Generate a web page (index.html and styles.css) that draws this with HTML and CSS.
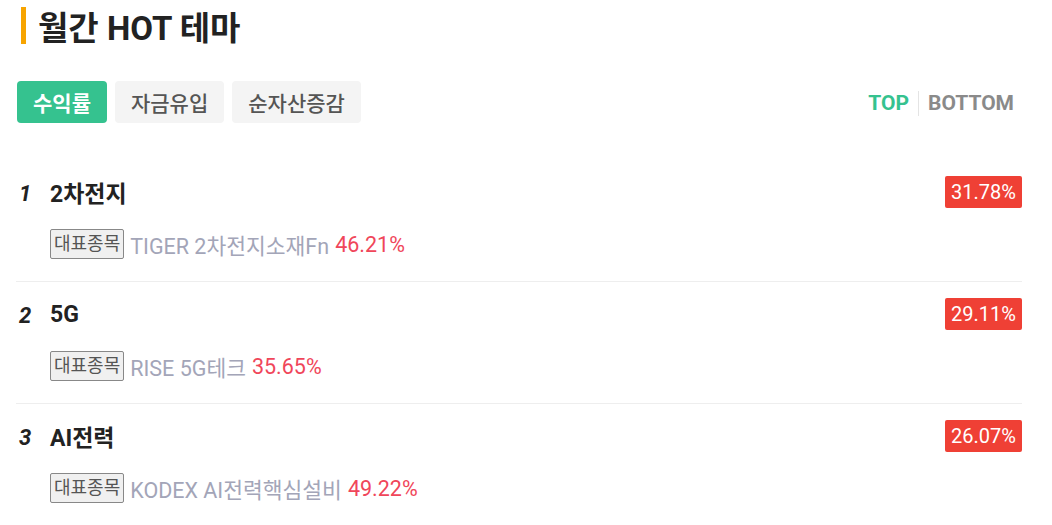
FILE: index.html
```html
<!DOCTYPE html>
<html lang="ko">
<head>
<meta charset="utf-8">
<link rel="stylesheet" href="styles.css">
</head>
<body>
<div class="wrap">
  <h2 class="title"><span class="bar"></span>월간 HOT 테마</h2>
  <div class="toolbar">
    <div class="tabs">
      <button class="tab active">수익률</button>
      <button class="tab">자금유입</button>
      <button class="tab">순자산증감</button>
    </div>
    <div class="sort">
      <span class="sort-item on">TOP</span>
      <span class="sep"></span>
      <span class="sort-item">BOTTOM</span>
    </div>
  </div>
  <ul class="list">
    <li class="row">
      <div class="main">
        <span class="rank">1</span>
        <span class="name">2차전지</span>
        <span class="rate">31.78%</span>
      </div>
      <div class="sub">
        <span class="tag">대표종목</span>
        <span class="fund">TIGER 2차전지소재Fn</span>
        <span class="fund-rate">46.21%</span>
      </div>
    </li>
    <li class="row">
      <div class="main">
        <span class="rank">2</span>
        <span class="name">5G</span>
        <span class="rate">29.11%</span>
      </div>
      <div class="sub">
        <span class="tag">대표종목</span>
        <span class="fund">RISE 5G테크</span>
        <span class="fund-rate">35.65%</span>
      </div>
    </li>
    <li class="row">
      <div class="main">
        <span class="rank">3</span>
        <span class="name">AI전력</span>
        <span class="rate">26.07%</span>
      </div>
      <div class="sub">
        <span class="tag">대표종목</span>
        <span class="fund">KODEX AI전력핵심설비</span>
        <span class="fund-rate">49.22%</span>
      </div>
    </li>
  </ul>
</div>
</body>
</html>
```

FILE: styles.css
```css
* { box-sizing: border-box; }
html, body { margin: 0; padding: 0; background: #fff; }
body {
  font-family: Roboto, "Noto Sans CJK KR", sans-serif;
  color: #222;
}
.wrap {
  padding: 7px 30px 0 16px;
}
.title {
  display: flex;
  align-items: center;
  gap: 12px;
  height: 37px;
  margin: 0;
  padding-left: 5px;
  font-size: 33px;
  font-weight: 700;
  color: #222;
}
.bar {
  display: block;
  width: 5px;
  height: 37px;
  background: #f7a400;
}
.toolbar {
  margin-top: 37px;
  display: flex;
  align-items: center;
  justify-content: space-between;
  padding-left: 1px;
}
.tabs {
  display: flex;
  gap: 8px;
}
.tab {
  height: 42px;
  padding: 0 16px;
  border: none;
  border-radius: 4px;
  background: #f4f4f4;
  color: #555;
  font-family: inherit;
  font-size: 21px;
  font-weight: 500;
}
.tab.active {
  background: #35c28f;
  color: #fff;
  font-weight: 700;
}
.sort {
  display: flex;
  align-items: center;
  gap: 9px;
  padding-right: 8px;
  margin-top: 2px;
}
.sort-item {
  font-size: 21px;
  font-weight: 700;
  color: #8a8a8a;
}
.sort-item.on { color: #35c28f; }
.sep {
  width: 1px;
  height: 25px;
  background: #e4e4e4;
}
.list {
  list-style: none;
  margin: 37px 0 0;
  padding: 0;
}
.row {
  padding: 16px 0 22px;
  border-bottom: 1px solid #eeeeee;
}
.row:last-child { border-bottom: none; }
.main {
  display: flex;
  align-items: center;
  height: 32px;
}
.rank {
  width: 34px;
  padding-left: 3px;
  font-size: 22px;
  font-weight: 700;
  font-style: italic;
  color: #222;
  margin-top: 2px;
}
.name {
  flex: 1;
  font-size: 23px;
  font-weight: 700;
  color: #222;
}
.rate {
  height: 32px;
  line-height: 32px;
  padding: 0 6px;
  border-radius: 2px;
  background: #ef4035;
  color: #fff;
  font-size: 20px;
}
.sub {
  display: flex;
  align-items: center;
  height: 30px;
  margin-top: 21px;
  padding-left: 34px;
  gap: 6px;
  font-size: 21.5px;
}
.tag {
  height: 30px;
  line-height: 28px;
  padding: 0 3px;
  border: 1px solid #888;
  border-radius: 2px;
  background: #f0f0f0;
  color: #555;
  font-size: 18px;
}
.fund { color: #a3a5b8; }
.fund-rate { color: #f0465a; }
```
